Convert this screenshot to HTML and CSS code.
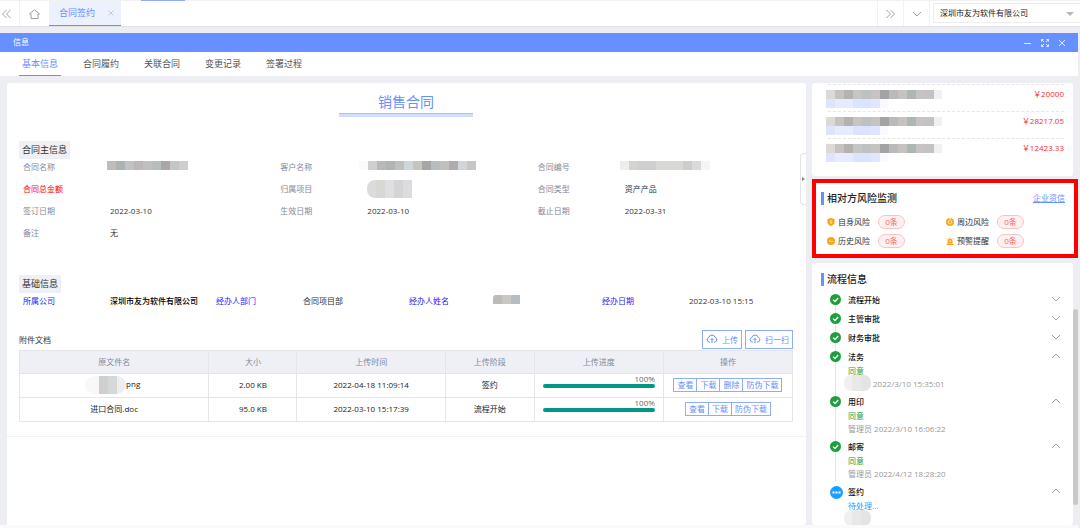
FILE: index.html
```html
<!DOCTYPE html>
<html lang="zh-Hans">
<head>
	<meta charset="UTF-8">
	<meta name="viewport" content="width=device-width, initial-scale=1">
	<title>合同签约</title>
	<link rel="stylesheet" href="styles.css">
</head>
<body>

	<!-- icons -->
	<svg class="sprite" aria-hidden="true">
		<symbol id="i-down" viewBox="0 0 10 6"><path d="M1 1l4 4 4-4"/></symbol>
		<symbol id="i-up" viewBox="0 0 10 6"><path d="M1 5l4-4 4 4"/></symbol>
		<symbol id="i-ok" viewBox="0 0 11 11"><circle cx="5.500" cy="5.500" r="5.500" fill="#1e9e3e"/><path d="M3 5.600l2 1.900 3.200-3.500" fill="none" stroke="#fff" stroke-width="1.300"/></symbol>
		<symbol id="i-cloud" viewBox="0 0 12 10"><path d="M4 8H3.200a2.300 2.300 0 0 1-.4-4.500 3.300 3.300 0 0 1 6.400 0 2.300 2.300 0 0 1-.4 4.500H8M6 9V4.500M4.500 6L6 4.500 7.500 6"/></symbol>
	</svg>

	<div class="topbar">
		<button class="top-btn first" aria-label="prev"><svg width="9" height="10" viewBox="0 0 9 10"><path d="M4.500 1l-4 4 4 4M8.500 1l-4 4 4 4"/></svg></button>
		<button class="top-btn home" aria-label="home"><svg width="11" height="10" viewBox="0 0 11 10"><path d="M.5 5l5-4.300 5 4.300H9v4.500H2V5z"/></svg></button>
		<div class="page-tab actived">
			<a href="#">合同签约</a>
			<button aria-label="close"><svg width="6" height="6" viewBox="0 0 6 6"><path d="M.5.5l5 5M5.500.5l-5 5"/></svg></button>
		</div>
		<div class="tab-hint"></div>
		<div class="top-right">
			<button class="top-btn" aria-label="next"><svg width="9" height="10" viewBox="0 0 9 10"><path d="M.5 1l4 4-4 4M4.500 1l4 4-4 4"/></svg></button>
			<button class="top-btn" aria-label="more"><svg width="10" height="6"><use href="#i-down"/></svg></button>
			<div class="company">
				<select aria-label="company">
					<option>深圳市友为软件有限公司</option>
				</select>
				<i class="caret"></i>
			</div>
		</div>
	</div>

	<div class="window">
		<div class="win-head">
			<span>信息</span>
			<div class="win-ctrl">
				<button aria-label="min"><svg width="8" height="8" viewBox="0 0 8 8"><path d="M0 4.500h7"/></svg></button>
				<button aria-label="full"><svg width="8" height="8" viewBox="0 0 8 8"><path d="M.5 2.500v-2h2M.5.5L3 3M5.500.5h2v2M7.500.5L5 3M.5 5.500v2h2M.5 7.500L3 5M5.500 7.500h2v-2M7.500 7.500L5 5"/></svg></button>
				<button aria-label="close"><svg width="8" height="8" viewBox="0 0 8 8"><path d="M1 1l6 6M7 1L1 7"/></svg></button>
			</div>
		</div>
		<nav class="sub-tabs">
			<a class="actived" href="#">基本信息</a>
			<a href="#">合同履约</a>
			<a href="#">关联合同</a>
			<a href="#">变更记录</a>
			<a href="#">签署过程</a>
		</nav>

		<div class="content">
			<main class="card detail">
				<h1>销售合同</h1>

				<h2>合同主信息</h2>
				<dl class="fields three">
					<div><dt>合同名称</dt><dd class="masked"><i class="mosaic m-name"></i></dd></div>
					<div><dt>客户名称</dt><dd class="masked"><i class="mosaic m-customer"></i></dd></div>
					<div><dt>合同编号</dt><dd class="masked"><i class="mosaic m-code"></i></dd></div>
					<div><dt class="red">合同总金额</dt><dd></dd></div>
					<div><dt>归属项目</dt><dd><i class="mosaic m-project"></i></dd></div>
					<div><dt>合同类型</dt><dd>资产产品</dd></div>
					<div><dt>签订日期</dt><dd>2022-03-10</dd></div>
					<div><dt>生效日期</dt><dd>2022-03-10</dd></div>
					<div><dt>截止日期</dt><dd>2022-03-31</dd></div>
					<div><dt>备注</dt><dd>无</dd></div>
				</dl>

				<h2>基础信息</h2>
				<dl class="fields four">
					<div><dt>所属公司</dt><dd class="strong">深圳市友为软件有限公司</dd></div>
					<div><dt>经办人部门</dt><dd>合同项目部</dd></div>
					<div><dt>经办人姓名</dt><dd class="masked"><i class="mosaic m-person"></i></dd></div>
					<div><dt>经办日期</dt><dd>2022-03-10 15:15</dd></div>
				</dl>

				<div class="file-bar">
					<span>附件文档</span>
					<div class="file-btns">
						<button><svg width="12" height="10"><use href="#i-cloud"/></svg>上传</button>
						<button><svg width="12" height="10"><use href="#i-cloud"/></svg>扫一扫</button>
					</div>
				</div>
				<table class="files">
					<colgroup>
						<col class="c-name"><col class="c-size"><col class="c-time"><col class="c-stage"><col class="c-bar"><col class="c-bar">
					</colgroup>
					<thead>
						<tr><th>原文件名</th><th>大小</th><th>上传时间</th><th>上传阶段</th><th>上传进度</th><th>操作</th></tr>
					</thead>
					<tbody>
						<tr>
							<td><i class="mosaic m-file"></i>png</td>
							<td>2.00 KB</td>
							<td>2022-04-18 11:09:14</td>
							<td>签约</td>
							<td class="progress"><span>100%</span><div></div></td>
							<td><div class="ops"><button>查看</button><button>下载</button><button>删除</button><button>防伪下载</button></div></td>
						</tr>
						<tr>
							<td>进口合同.doc</td>
							<td>95.0 KB</td>
							<td>2022-03-10 15:17:39</td>
							<td>流程开始</td>
							<td class="progress"><span>100%</span><div></div></td>
							<td><div class="ops"><button>查看</button><button>下载</button><button>防伪下载</button></div></td>
						</tr>
					</tbody>
				</table>
				<hr>
				<button class="fold" aria-label="fold"><i></i></button>
			</main>

			<aside class="side">
				<section class="card money">
					<div class="money-row"><div><i class="mosaic m-title"></i><i class="mosaic m-sub"></i></div><b>￥20000</b></div>
					<div class="money-row"><div><i class="mosaic m-title"></i><i class="mosaic m-sub"></i></div><b>￥28217.05</b></div>
					<div class="money-row"><div><i class="mosaic m-title"></i><i class="mosaic m-sub"></i></div><b>￥12423.33</b></div>
				</section>

				<section class="risk">
					<div class="side-head"><h3>相对方风险监测</h3><a href="#">企业资信</a></div>
					<ul>
						<li><svg width="8" height="8" viewBox="0 0 8 8"><path d="M4 0l3.500 1v3.500C7.500 6.500 5.500 7.500 4 8 2.500 7.500.5 6.500.5 4.500V1z" fill="#faa41a"/><path d="M4.500 1.800L3.200 4.100h1.600L3.800 6" fill="none" stroke="#fff" stroke-width=".7"/></svg>自身风险<em>0条</em></li>
						<li><svg width="8" height="8" viewBox="0 0 8 8"><circle cx="4" cy="4" r="4" fill="#faa41a"/><path d="M2.800 2.700a1.800 1.800 0 1 0 2.400 0M4 0v3.500" fill="none" stroke="#fff" stroke-width=".8"/></svg>周边风险<em>0条</em></li>
						<li><svg width="8" height="8" viewBox="0 0 8 8"><circle cx="4" cy="4" r="4" fill="#faa41a"/><path d="M2 3.300l2 1.500 2-.7" fill="none" stroke="#fff" stroke-width=".8"/></svg>历史风险<em>0条</em></li>
						<li><svg width="8" height="8" viewBox="0 0 8 8"><path d="M1.500 6.500V4a2.500 2.500 0 0 1 5 0v2.500zM.5 6.800h7V8h-7zM3.600 0h.8v1h-.8zM.3 1.500l.6-.5.7.7-.6.5zM7.700 1.500L7.100 1l-.7.7.6.5z" fill="#faa41a"/><path d="M4 3.300v1.800" stroke="#fff"/></svg>预警提醒<em>0条</em></li>
					</ul>
				</section>

				<section class="card flow">
					<div class="side-head"><h3>流程信息</h3></div>
					<ol>
						<li><svg class="dot" width="11" height="11"><use href="#i-ok"/></svg><div class="step"><strong>流程开始</strong></div><button aria-label="open"><svg width="10" height="6"><use href="#i-down"/></svg></button></li>
						<li><svg class="dot" width="11" height="11"><use href="#i-ok"/></svg><div class="step"><strong>主管审批</strong></div><button aria-label="open"><svg width="10" height="6"><use href="#i-down"/></svg></button></li>
						<li><svg class="dot" width="11" height="11"><use href="#i-ok"/></svg><div class="step"><strong>财务审批</strong></div><button aria-label="open"><svg width="10" height="6"><use href="#i-down"/></svg></button></li>
						<li><svg class="dot" width="11" height="11"><use href="#i-ok"/></svg><div class="step"><strong>法务</strong><p class="agree">同意</p><p><i class="mosaic m-user"></i>2022/3/10 15:35:01</p></div><button aria-label="close"><svg width="10" height="6"><use href="#i-up"/></svg></button></li>
						<li><svg class="dot" width="11" height="11"><use href="#i-ok"/></svg><div class="step"><strong>用印</strong><p class="agree">同意</p><p>管理员 2022/3/10 16:06:22</p></div><button aria-label="close"><svg width="10" height="6"><use href="#i-up"/></svg></button></li>
						<li><svg class="dot" width="11" height="11"><use href="#i-ok"/></svg><div class="step"><strong>邮寄</strong><p class="agree">同意</p><p>管理员 2022/4/12 18:28:20</p></div><button aria-label="close"><svg width="10" height="6"><use href="#i-up"/></svg></button></li>
						<li><svg class="dot now" width="13" height="13" viewBox="0 0 13 13"><circle cx="6.500" cy="6.500" r="6.500" fill="#1e9fff"/><path d="M2.500 6.500h2M5.500 6.500h2M8.500 6.500h2" stroke="#fff" stroke-width="2"/></svg><div class="step"><strong>签约</strong><p class="wait">待处理...</p><p><i class="mosaic m-user"></i></p></div><button aria-label="close"><svg width="10" height="6"><use href="#i-up"/></svg></button></li>
					</ol>
				</section>
			</aside>
			<div class="scroll"></div>
		</div>
	</div>

</body>
</html>
```

FILE: styles.css
```css
*{
	margin: 0;
	padding: 0;
	box-sizing: border-box;
}
body{
	height: 100vh;
	display: flex;
	flex-direction: column;
	overflow: hidden;
	background-color: #eceef4;
	color: #333;
	font: 8px/12px "Open Sans", "Noto Sans CJK SC", sans-serif;
}
button{
	border: 0;
	background: none;
	color: inherit;
	font: inherit;
	cursor: pointer;
}
a{
	color: inherit;
	text-decoration: none;
}
ul, ol{
	list-style: none;
}
i, em{
	font-style: normal;
}
svg{
	display: block;
	flex: none;
	fill: none;
	stroke: #a0a0a0;
}
svg [fill]:not([stroke]){
	stroke: none;
}
.sprite{
	position: absolute;
	width: 0;
	height: 0;
}

/* top bar */
.topbar{
	flex: none;
	height: 27px;
	display: flex;
	background-color: #fff;
	border-top: 1px solid #f2f2f2;
	border-bottom: 1px solid #dfe1e6;
}
.top-btn{
	width: 26px;
	display: flex;
	align-items: center;
	justify-content: center;
	border-left: 1px solid #f2f2f2;
}
.top-btn.first{
	width: 19px;
	padding-right: 6px;
	border-left: 0;
}
.top-btn.home{
	width: 30px;
}
.page-tab{
	width: 72px;
	padding: 0 7px 0 10px;
	display: flex;
	align-items: center;
	justify-content: space-between;
	font-size: 9px;
}
.page-tab.actived{
	color: #668fff;
	background-color: #edf1fe;
	border-bottom: 1px solid #668fff;
}
.page-tab svg{
	stroke: #c4c8d4;
}
.tab-hint{
	width: 44px;
	height: 1px;
	margin: -1px 0 0 20px;
	background-color: #8eabff;
}
.top-right{
	display: flex;
	margin-left: auto;
}
.company{
	position: relative;
	padding: 2px 0 3px 3px;
	border-left: 1px solid #f2f2f2;
}
.company select{
	width: 147px;
	height: 20px;
	padding: 0 6px;
	appearance: none;
	border: 1px solid #eee;
	border-right: 0;
	background-color: #fff;
	color: #222;
	font: inherit;
}
.caret{
	position: absolute;
	right: 6px;
	top: 11px;
	border: 4px solid transparent;
	border-top-color: #b8b8b8;
	border-bottom: 0;
}

/* window */
.window{
	flex: 1;
	min-height: 0;
	display: flex;
	flex-direction: column;
	margin: 6px 2px 0 0;
	border-bottom: 3px solid #fafafb;
}
.win-head{
	height: 19px;
	flex: none;
	display: flex;
	align-items: center;
	justify-content: space-between;
	padding: 0 12px 2px 13px;
	background-color: #668fff;
	color: #fff;
}
.win-ctrl{
	display: flex;
	gap: 9px;
	padding-top: 3px;
}
.win-ctrl svg{
	stroke: #e4ebff;
}
.sub-tabs{
	height: 24px;
	flex: none;
	display: flex;
	gap: 19px;
	padding-left: 19px;
	background-color: #fff;
	font-size: 9px;
	line-height: 23px;
	color: #555;
}
.sub-tabs a{
	padding: 0 3px;
}
.sub-tabs .actived{
	color: #668fff;
	border-bottom: 1px solid #668fff;
}
.content{
	flex: 1;
	min-height: 0;
	display: flex;
	padding: 7px 0 0 7px;
}
.card{
	background-color: #fff;
	border-radius: 3px;
}

/* contract detail */
.detail{
	position: relative;
	flex: 1;
	border-bottom-left-radius: 0;
	padding: 9px 13px 0 12px;
}
.detail h1{
	width: 134px;
	height: 25px;
	margin: 0 auto 24px;
	color: #668fff;
	font-size: 14px;
	font-weight: normal;
	line-height: 20px;
	text-align: center;
	border-bottom: 3px solid #d3deff;
	box-shadow: inset 0 -1px #a9befd;
}
.detail h2{
	width: max-content;
	height: 18px;
	padding: 0 3px;
	background-color: #eef0f5;
	font-size: 9px;
	font-weight: normal;
	line-height: 18px;
}
.fields{
	display: grid;
	row-gap: 6px;
	margin-left: 4px;
	line-height: 16px;
}
.fields > div{
	display: flex;
	height: 16px;
	white-space: nowrap;
}
.fields dt{
	width: 87px;
	flex: none;
	color: #83899c;
}
.fields dt.red{
	color: #f00;
}
.fields.three{
	grid-template-columns: repeat(3, 1fr);
	margin-right: -2px;
	margin-bottom: 34px;
}
.fields.four{
	grid-template-columns: repeat(4, 1fr);
	margin-right: -2px;
}
.fields.four dt{
	color: #1a1aff;
}
.fields .strong{
	color: #000;
	font-weight: 500;
}
.fields .masked{
	margin-left: -3px;
}
.file-bar{
	height: 20px;
	margin-top: 21px;
	display: flex;
	align-items: center;
	justify-content: space-between;
}
.file-btns{
	display: flex;
	gap: 3px;
	padding-bottom: 1px;
}
.file-btns button{
	height: 19px;
	display: flex;
	align-items: center;
	gap: 4px;
	padding: 0 3px;
	border: 1px solid #8eabff;
	color: #668fff;
}
.file-btns svg{
	margin-bottom: 2px;
	stroke: #668fff;
}
.files{
	width: 100%;
	table-layout: fixed;
	border-collapse: collapse;
	text-align: center;
	color: #222;
}
.c-name{ width: 24.5%; }
.c-size{ width: 11.4%; }
.c-time{ width: 19.2%; }
.c-stage{ width: 11.5%; }
.c-bar{ width: 16.7%; }
.files th, .files td{
	height: 24px;
	border: 1px solid #e4e5e9;
	vertical-align: middle;
}
.files th{
	height: 23px;
	background-color: #eef0f5;
	color: #83899c;
	font-weight: normal;
}
.files td{
	padding-bottom: 1px;
}
.files .progress{
	padding: 0 8px 9px;
	text-align: right;
	color: #666;
	line-height: 8px;
}
.progress span{
	display: block;
}
.progress div{
	height: 4px;
	margin-top: 1px;
	border-radius: 2px;
	background-color: #009688;
}
.ops{
	display: flex;
	justify-content: center;
}
.ops button{
	height: 14px;
	padding: 0 3px;
	border: 1px solid #8eabff;
	color: #668fff;
	line-height: 12px;
}
.ops button + button{
	margin-left: -1px;
}
.detail hr{
	margin: 14px -13px 0 -12px;
	border: 0;
	border-top: 1px solid #f2f2f4;
}
.fold{
	position: absolute;
	right: 0;
	top: 70px;
	width: 6px;
	height: 52px;
	border: 1px solid #e4e5e9;
	border-right: 0;
	border-radius: 4px 0 0 4px;
}
.fold i{
	display: block;
	margin-left: 1px;
	border: 2px solid transparent;
	border-left: 3px solid #888;
	border-right: 0;
}

/* side */
.side{
	width: 266px;
	flex: none;
	margin-left: 6px;
	display: flex;
	flex-direction: column;
	overflow: hidden;
}
.side .card{
	margin-right: 5px;
}
.money{
	height: 93px;
	flex: none;
	padding: 1px 9px 0 16px;
}
.money-row{
	height: 27px;
	display: flex;
	justify-content: space-between;
	border-top: 1px dashed #e6e6e6;
	padding-top: 5px;
}
.money-row > div{
	margin-left: -2px;
}
.money-row b{
	color: #ff2a2a;
	font-weight: normal;
	line-height: 8px;
}
.risk{
	flex: none;
	height: 79px;
	margin: 3px 0 5px;
	padding: 7px 9px 0 5px;
	border: 4px solid #f00;
	background-color: #fff;
}
.side-head{
	display: flex;
	align-items: center;
	justify-content: space-between;
	height: 16px;
}
.side-head h3{
	padding-left: 3px;
	border-left: 3px solid #668fff;
	color: #222;
	font-size: 10px;
	font-weight: 500;
	line-height: 13px;
}
.side-head a{
	color: #668fff;
	text-decoration: underline;
}
.risk ul{
	display: grid;
	grid-template-columns: 1fr 1fr;
	row-gap: 5px;
	padding: 9px 0 0 6px;
}
.risk li{
	height: 14px;
	display: flex;
	align-items: center;
	gap: 3px;
}
.risk em{
	width: 27px;
	height: 14px;
	margin-left: 5px;
	border: 1px solid #fbc4c4;
	border-radius: 7px;
	background-color: #fef0f0;
	color: #f56c6c;
	text-align: center;
}
.flow{
	flex: 1;
	min-height: 0;
	overflow: hidden;
	padding: 8px 12px 0 9px;
}
.flow ol{
	padding: 3px 0 0 8px;
}
.flow li{
	display: flex;
	align-items: flex-start;
	min-height: 19px;
	background: linear-gradient(#e6e6e6, #e6e6e6) 6px 0 / 1px 100% no-repeat;
}
.flow li:first-child{
	background-position: 6px 8px;
}
.flow li:last-child{
	background: none;
}
.dot{
	margin: 4px 7px 0 1px;
}
.dot.now{
	margin: 4px 5px 0 1px;
}
.step{
	flex: 1;
	color: #999;
	line-height: 13px;
}
.step strong{
	display: block;
	color: #111;
	font-weight: 500;
	line-height: 19px;
}
.step p{
	height: 13px;
	line-height: 9px;
	white-space: nowrap;
}
.step .agree{
	color: #1e9e3e;
}
.step .wait{
	color: #1e9fff;
}
.flow li button{
	padding-top: 6px;
}
.scroll{
	width: 5px;
	height: 196px;
	align-self: flex-start;
	margin: 226px 0 0 -5px;
	border-radius: 3px;
	background-color: #c8c9cc;
}

/* masked texts */
.mosaic{
	display: block;
	height: 9px;
}
.masked .mosaic{
	margin-top: 2px;
}
.m-name{
	width: 81px;
	background: linear-gradient(90deg, #c1bcb8 9px, #adb3b3 9px 18px, #c2c1c3 18px 27px, #bcb6b7 27px 36px, #c1c0be 36px 45px, #b8bdbd 45px 54px, #aba5a7 54px 63px, #c4c6c5 63px 72px, #cdcfce 72px);
}
.m-customer{
	width: 117px;
	margin-left: -5px;
	background: linear-gradient(90deg, #fafafa 9px, #d0cfcf 9px 18px, #b8bab9 18px 27px, #afb5b5 27px 36px, #bfbfbd 36px 45px, #cfd6d9 45px 54px, #c5c5bf 54px 63px, #a5a6a6 63px 72px, #b5bdbe 72px 81px, #c0c0be 81px 90px, #afabac 90px 99px, #d0d5d9 99px 108px, #c6c6c6 108px);
}
.m-code{
	width: 90px;
	margin-left: -2px;
	background: linear-gradient(90deg, #eceeee 9px, #d4d4cc 9px 18px, #cfcfcf 18px 36px, #d8d8d4 36px 63px, #cdcdce 63px 72px, #dadada 72px 81px, #f4f5f6 81px);
}
.m-project{
	width: 45px;
	height: 18px;
	margin-top: -1px;
	border-radius: 8px 0 0 8px;
	background: linear-gradient(90deg, #dcdbdb 9px, #d7d7d3 9px 18px, #dedfe3 18px 27px, #d4d4d6 27px 36px, #dcdbdd 36px);
}
.m-person{
	width: 27px;
	border-radius: 3px 0 0 0;
	background: linear-gradient(90deg, #bcbaba 9px, #c8c7c4 9px 18px, #b7bcc0 18px);
}
.files .m-file{
	display: inline-block;
	width: 41px;
	height: 18px;
	margin-left: -3px;
	border-radius: 9px;
	vertical-align: middle;
	background: linear-gradient(90deg, #f8f8f8 14px, #cfcfcf 14px 23px, #d3d8da 23px 32px, #eee 32px);
}
.m-title{
	width: 116px;
	background: linear-gradient(90deg, #dcdad9 9px, #c4c3c0 9px 18px, #b3b2b0 18px 27px, #c5c5c4 27px 36px, #bdc1c1 36px 45px, #c6c3c1 45px 54px, #a2a3a2 54px 63px, #bababb 63px 72px, #c6c2c0 72px 81px, #adb6b4 81px 90px, #c7c3c3 90px 99px, #c3c3c3 99px 108px, #f0f0f2 108px);
}
.m-sub{
	width: 62px;
	background: linear-gradient(90deg, #dde4fc 9px, #e7ebff 9px 27px, #dce3ff 27px 45px, #e0e6ff 45px 54px, #f8faff 54px);
}
.step .m-user{
	display: inline-block;
	width: 27px;
	height: 16px;
	margin: -4px 2px 0 -4px;
	border-radius: 7px;
	vertical-align: middle;
	background: linear-gradient(90deg, #f0f0f0 8px, #e8e8e8 8px 17px, #e4e4e5 17px);
}
```
